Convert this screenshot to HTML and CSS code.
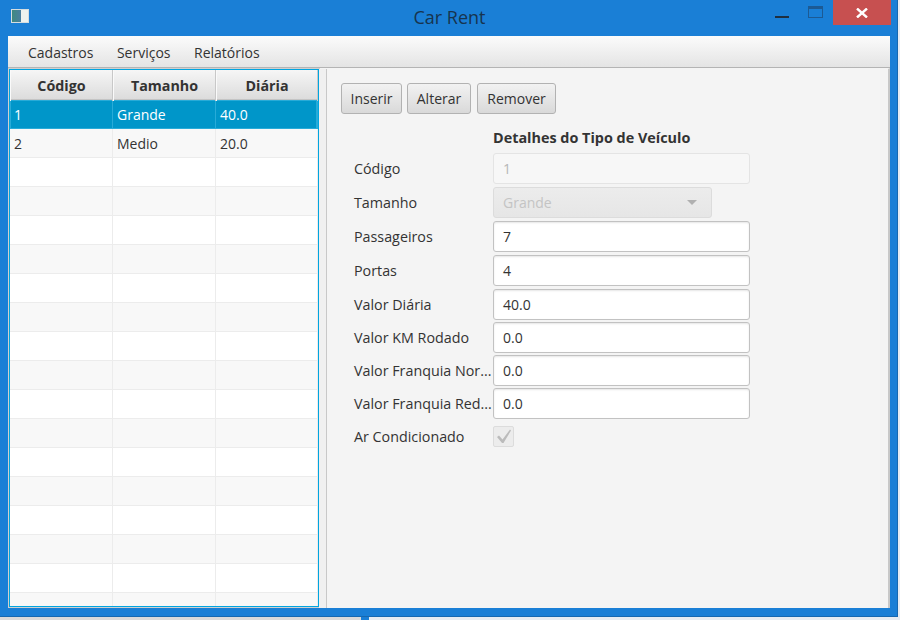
FILE: index.html
```html
<!DOCTYPE html>
<html lang="pt">
<head>
  <meta charset="UTF-8">
  <title>Car Rent</title>
  <link rel="stylesheet" href="styles.css">
</head>
<body>
  <div class="window">
    <div class="titlebar">
      <div class="app-icon"><span class="app-icon-img"></span></div>
      <div class="title">Car Rent</div>
      <div class="controls">
        <span class="btn-min"></span>
        <span class="btn-max"></span>
        <span class="btn-close">
          <svg width="12" height="10" viewBox="0 0 12 10"><path d="M1 0.5 L11 9.5 M11 0.5 L1 9.5" stroke="#fff" stroke-width="2.4" fill="none"/></svg>
        </span>
      </div>
    </div>
    <div class="content">
      <div class="menubar">
        <span>Cadastros</span>
        <span>Serviços</span>
        <span>Relatórios</span>
      </div>
      <div class="split">
        <div class="table">
          <div class="row head"><div>Código</div><div>Tamanho</div><div>Diária</div></div>
          <div class="row selected"><div>1</div><div>Grande</div><div>40.0</div></div>
          <div class="row odd"><div>2</div><div>Medio</div><div>20.0</div></div>
          <div class="row"><div></div><div></div><div></div></div>
          <div class="row odd"><div></div><div></div><div></div></div>
          <div class="row"><div></div><div></div><div></div></div>
          <div class="row odd"><div></div><div></div><div></div></div>
          <div class="row"><div></div><div></div><div></div></div>
          <div class="row odd"><div></div><div></div><div></div></div>
          <div class="row"><div></div><div></div><div></div></div>
          <div class="row odd"><div></div><div></div><div></div></div>
          <div class="row"><div></div><div></div><div></div></div>
          <div class="row odd"><div></div><div></div><div></div></div>
          <div class="row"><div></div><div></div><div></div></div>
          <div class="row odd"><div></div><div></div><div></div></div>
          <div class="row"><div></div><div></div><div></div></div>
          <div class="row odd"><div></div><div></div><div></div></div>
          <div class="row"><div></div><div></div><div></div></div>
          <div class="row odd"><div></div><div></div><div></div></div>
        </div>
        <div class="divider"></div>
        <div class="details">
          <div class="toolbar">
            <button class="btn-inserir">Inserir</button>
            <button class="btn-alterar">Alterar</button>
            <button class="btn-remover">Remover</button>
          </div>
          <div class="form">
            <div></div>
            <div class="form-title">Detalhes do Tipo de Veículo</div>

            <label>Código</label>
            <div class="field disabled">1</div>

            <label class="gap">Tamanho</label>
            <div class="combo gap"><span>Grande</span><i class="arrow"></i></div>

            <label class="gap">Passageiros</label>
            <div class="field gap">7</div>

            <label class="gap">Portas</label>
            <div class="field gap">4</div>

            <label class="gap">Valor Diária</label>
            <div class="field gap">40.0</div>

            <label>Valor KM Rodado</label>
            <div class="field">0.0</div>

            <label>Valor Franquia Nor...</label>
            <div class="field">0.0</div>

            <label>Valor Franquia Red...</label>
            <div class="field">0.0</div>

            <label class="r-check">Ar Condicionado</label>
            <div class="check r-check">
              <svg width="16" height="15" viewBox="0 0 16 15"><path d="M1 8 L3 6.5 L6.5 10.5 L14 0.5 L15 1.5 L7.5 14 L6 14 Z" fill="#bbb"/></svg>
            </div>
          </div>
        </div>
      </div>
    </div>
  </div>
  <div class="desktop">
    <div class="desk-left"></div>
    <div class="desk-mark"></div>
  </div>
</body>
</html>
```

FILE: styles.css
```css
html, body {
  margin: 0;
  height: 620px;
  overflow: hidden;
}

body {
  background: #e6ecf2;
  font-family: "Open Sans", "Noto Sans", sans-serif;
  font-size: 14px;
  color: #333;
}

.window {
  width: 898px;
  height: 617px;
  box-sizing: border-box;
  background: #1a7fd6;
  border-right: 1px solid #1668b0;
  border-bottom: 1px solid #1668b0;
  padding: 0 7px 8px 8px;
  display: flex;
  flex-direction: column;
}

.titlebar {
  height: 36px;
  flex: none;
  display: grid;
  grid-template-columns: 1fr auto 1fr;
  margin-right: -1px;
}

.app-icon-img {
  display: block;
  width: 18px;
  height: 14px;
  margin: 9px 0 0 3px;
  background: linear-gradient(90deg, #3f8a80 0, #4a7fa0 55%, #eef2ee 56%);
  border: 1px solid #d5dde0;
  box-sizing: border-box;
}

.title {
  font-size: 18px;
  color: #17344e;
  padding-top: 5px;
  line-height: 25px;
}

.controls {
  display: flex;
  justify-content: flex-end;
  align-items: flex-start;
}

.btn-min {
  width: 14px;
  height: 2px;
  margin: 16px 19px 0 0;
  background: #1f2f3f;
}

.btn-max {
  width: 15px;
  height: 12px;
  box-sizing: border-box;
  margin: 6px 10px 0 0;
  border: 1px solid #1c5a94;
  border-top-width: 3px;
}

.btn-close {
  width: 58px;
  height: 25px;
  background: #c75050;
  display: flex;
  align-items: center;
  justify-content: center;
}

.content {
  flex: 1;
  min-height: 0;
  background: #f4f4f4;
  display: flex;
  flex-direction: column;
}

.menubar {
  height: 29px;
  flex: none;
  padding: 2px 0 0 20px;
  display: flex;
  gap: 23.5px;
  align-items: center;
  background: linear-gradient(#fbfbfb, #e4e4e4);
  border-bottom: 1px solid #b4b4b4;
}

.split {
  flex: 1;
  min-height: 0;
  display: flex;
}

.table {
  width: 310px;
  box-sizing: border-box;
  margin: 1px 0 1px 1px;
  border: 1px solid #00a5e0;
  box-shadow: 0 0 0 1px #cfcfcf;
  overflow: hidden;
  background: #fff;
  flex: none;
}

.row {
  display: grid;
  grid-template-columns: 103px 103px 102px;
  height: 29px;
  box-sizing: border-box;
  border-bottom: 1px solid #ececec;
  background: #fff;
}

.row div {
  padding-left: 4px;
  line-height: 29px;
  border-right: 1px solid #ececec;
}

.row.odd {
  background: #f8f8f8;
}

.row.head {
  height: 30px;
  background: linear-gradient(#f6f6f6, #dcdcdc);
  border-bottom: 1px solid #c4c4c4;
  font-size: 14.3px;
  font-weight: 700;
  color: #333;
}

.row.head div {
  padding-left: 0;
  text-align: center;
  line-height: 31px;
  border-right: 1px solid #c8c8c8;
  border-left: 1px solid #fafafa;
}

.row.selected {
  background: #0096c9;
  color: #fff;
  border: 1px solid #28abd8;
  grid-template-columns: 102px 103px 101px;
}

.row.selected div {
  border-right: 1px solid #28abd8;
  line-height: 27px;
}

.row.selected div:first-child {
  padding-left: 3px;
}

.divider {
  width: 7px;
  flex: none;
  background: #f0f0f0;
  border-right: 1px solid #c8c8c8;
  margin-top: 1px;
}

.details {
  flex: 1;
  padding: 14px 0 0 14px;
  border-right: 2px solid #c8c8c8;
  border-top: 1px solid #f4f4f4;
}

.toolbar {
  display: flex;
  gap: 5px;
}

.toolbar button {
  height: 31px;
  padding: 0;
  font: inherit;
  color: #333;
  background: linear-gradient(#f2f2f2, #d9d9d9);
  border: 1px solid #b2b2b2;
  border-radius: 3px;
}

.btn-inserir {
  width: 61px;
}

.btn-alterar {
  width: 64px;
  margin-right: 1px;
}

.btn-remover {
  width: 79px;
}

.form {
  display: grid;
  grid-template-columns: 139px 257px;
  margin: 9px 0 0 13px;
  row-gap: 2px;
  align-items: center;
}

.form-title {
  font-size: 14.4px;
  font-weight: 700;
  padding-top: 2px;
  line-height: 26px;
}

.form label {
  font-size: 14.3px;
  line-height: 20px;
}

.field {
  height: 31px;
  box-sizing: border-box;
  padding-left: 9px;
  line-height: 29px;
  background: #fff;
  border: 1px solid #c2c2c2;
  border-radius: 3px;
  box-shadow: inset 0 1px 2px #e6e6e6;
}

.field.disabled {
  color: #b6b6b6;
  background: #f7f7f7;
  border-color: #e4e4e4;
  box-shadow: none;
}

.gap {
  margin-top: 1px;
}

.combo {
  width: 219px;
  height: 31px;
  box-sizing: border-box;
  padding: 0 14px 0 9px;
  display: flex;
  align-items: center;
  justify-content: space-between;
  color: #c4c4c4;
  background: linear-gradient(#ececec, #e6e6e6);
  border: 1px solid #dcdcdc;
  border-radius: 3px;
}

.arrow {
  width: 0;
  height: 0;
  border-left: 5px solid transparent;
  border-right: 5px solid transparent;
  border-top: 5px solid #b0b0b0;
}

.r-check {
  margin-top: 5px;
}

.check {
  width: 21px;
  height: 21px;
  box-sizing: border-box;
  display: flex;
  align-items: center;
  justify-content: center;
  background: #ececec;
  border: 1px solid #dcdcdc;
  border-radius: 2px;
}

.desktop {
  display: flex;
  height: 3px;
}

.desk-left {
  width: 361px;
  background: #dadada;
}

.desk-mark {
  width: 8px;
  background: #1a7fd6;
}
```
